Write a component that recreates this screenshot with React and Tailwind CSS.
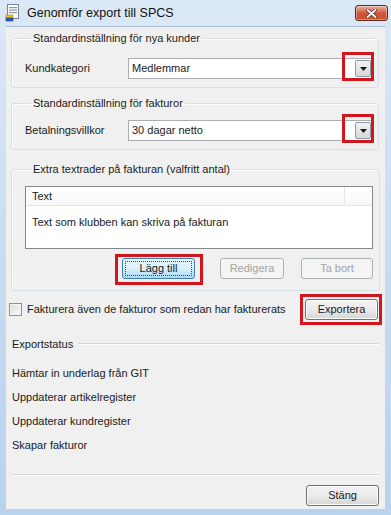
import { ChevronDown } from "lucide-react";

const FONT = { fontFamily: '"Liberation Sans", Arial, sans-serif' };

function TitleIcon() {
  return (
    <svg width="16" height="18" viewBox="0 0 16 18">
      <rect x="2.5" y="0.5" width="11" height="14" fill="#fdfdfd" stroke="#7b8694" />
      <rect x="4" y="3" width="8" height="1.2" fill="#8a96a6" />
      <rect x="4" y="5.5" width="8" height="1.2" fill="#8a96a6" />
      <rect x="4" y="8" width="8" height="1.2" fill="#8a96a6" />
      <rect x="1" y="11" width="7" height="3" fill="#f2c230" stroke="#b88a12" strokeWidth="0.6" />
      <rect x="1" y="14" width="7" height="3" fill="#2f5fa8" stroke="#203f72" strokeWidth="0.6" />
    </svg>
  );
}

function CloseButton() {
  return (
    <div className="w-[33px] h-[16px] rounded-[3px] border border-[#5e2a20] bg-gradient-to-b from-[#eab1a1] via-[#d1573c] to-[#c9502f] flex items-center justify-center shadow-[inset_0_0_0_1px_rgba(255,255,255,0.35)]">
      <svg width="11" height="9" viewBox="0 0 11 9">
        <path d="M1.5 1 L9.5 8 M9.5 1 L1.5 8" stroke="#5a2418" strokeWidth="3.2" strokeLinecap="round" />
        <path d="M1.5 1 L9.5 8 M9.5 1 L1.5 8" stroke="#ffffff" strokeWidth="1.8" strokeLinecap="round" />
      </svg>
    </div>
  );
}

function Combo({ value }) {
  return (
    <div className="relative flex-1 h-[21px] bg-white border border-[#abadb3] flex items-center">
      <span className="pl-[3px] flex-1 text-[#1a1a1a]">{value}</span>
      <div className="w-[16px] h-[17px] mr-[1px] border border-[#8e9aa8] rounded-[2px] bg-gradient-to-b from-[#f4f4f4] to-[#d6d6d6] flex items-center justify-center">
        <svg width="7" height="4" viewBox="0 0 7 4">
          <path d="M0 0 H7 L3.5 4 Z" fill="#1b1b1b" />
        </svg>
      </div>
      {/* red annotation */}
      <div className="absolute right-[-2px] top-[-7px] w-[32px] h-[29px] border-[3px] border-[#d2161e]" />
    </div>
  );
}

function Btn({ children, disabled, focused, className = "" }) {
  if (disabled) {
    return (
      <div className={`h-[21px] rounded-[3px] border border-[#adb2b5] bg-[#f4f4f4] flex items-center justify-center text-[#a3a3a3] ${className}`}>
        {children}
      </div>
    );
  }
  if (focused) {
    return (
      <div className={`h-[21px] rounded-[3px] border border-[#3c7fb1] bg-gradient-to-b from-[#eaf6fd] via-[#d9f0fc] to-[#a7d9f5] p-[2px] ${className}`}>
        <div className="h-full border border-dotted border-[#444] flex items-center justify-center text-[#1a1a1a]">
          {children}
        </div>
      </div>
    );
  }
  return (
    <div className={`h-[21px] rounded-[3px] border border-[#707070] bg-gradient-to-b from-[#f2f2f2] via-[#ebebeb] to-[#d5d5d5] flex items-center justify-center text-[#1a1a1a] shadow-[inset_0_0_0_1px_#fcfcfc] ${className}`}>
      {children}
    </div>
  );
}

function Group({ legend, children, className = "" }) {
  return (
    <fieldset className={`border border-[#d5dfe5] rounded-[3px] shadow-[inset_1px_1px_0_#fff] ${className}`}>
      <legend className="ml-[6px] px-[2px] leading-[15px] text-[#1a1a1a]">{legend}</legend>
      {children}
    </fieldset>
  );
}

export default function App() {
  return (
    <div
      className="w-[391px] h-[515px] flex flex-col bg-gradient-to-b from-[#dbe8f6] via-[#c9dcf1] to-[#b9d2ee] text-[11px] overflow-hidden"
      style={FONT}
    >
      {/* title bar */}
      <div className="h-[26px] flex items-center pl-[5px] pr-[3px]">
        <TitleIcon />
        <span className="ml-[6px] text-[12.5px] text-[#111]">Genomför export till SPCS</span>
        <div className="flex-1" />
        <CloseButton />
      </div>

      {/* client area */}
      <div className="flex-1 ml-[6px] mr-[6px] mb-[6px] bg-[#f0f0f0] border-t border-[#a9bdd4] flex flex-col pl-[5px] pr-[6px] text-[#1a1a1a]">
        <Group legend="Standardinställning för nya kunder" className="mt-[4px] pl-[13px] pr-[5px] pt-[12px] pb-[8px]">
          <div className="flex items-center">
            <span className="w-[103px]">Kundkategori</span>
            <Combo value="Medlemmar" />
          </div>
        </Group>

        <Group legend="Standardinställning för fakturor" className="mt-[8px] pl-[13px] pr-[5px] pt-[9px] pb-[8px]">
          <div className="flex items-center">
            <span className="w-[103px]">Betalningsvillkor</span>
            <Combo value="30 dagar netto" />
          </div>
        </Group>

        <Group legend="Extra textrader på fakturan (valfritt antal)" className="mt-[12px] pl-[13px] pr-[6px] pt-[9px] pb-[11px]">
          <div className="h-[63px] bg-white border border-[#828790] flex flex-col">
            <div className="h-[19px] flex border-b border-[#e3e6ea] bg-gradient-to-b from-white to-[#f7f8fa]">
              <div className="flex-1 pl-[6px] flex items-center border-r border-[#e3e6ea]">Text</div>
              <div className="w-[27px]" />
            </div>
            <div className="pl-[6px] pt-[8px]">Text som klubben kan skriva på fakturan</div>
          </div>
          <div className="flex mt-[9px]">
            <div className="relative ml-[97px]">
              <Btn focused className="w-[73px]">Lägg till</Btn>
              <div className="absolute left-[-7px] right-[-8px] top-[-4px] bottom-[-6px] border-[3px] border-[#d2161e]" />
            </div>
            <Btn disabled className="w-[64px] ml-[25px]">Redigera</Btn>
            <Btn disabled className="w-[72px] ml-[17px]">Ta bort</Btn>
          </div>
        </Group>

        <div className="flex items-center mt-[8px]">
          <div className="w-[13px] h-[13px] ml-[-2px] border border-[#8e8f8f] bg-gradient-to-br from-[#dcdcdc] to-[#fbfbfb] shadow-[inset_0_0_0_1px_#f4f4f4]" />
          <span className="ml-[5px]">Fakturera även de fakturor som redan har fakturerats</span>
          <div className="flex-1" />
          <div className="relative mr-[1px]">
            <Btn className="w-[73px]">Exportera</Btn>
            <div className="absolute left-[-5px] right-[-4px] top-[-5px] bottom-[-5px] border-[3px] border-[#d2161e]" />
          </div>
        </div>

        <div className="flex items-center mt-[16px]">
          <span className="ml-[1px]">Exportstatus</span>
          <div className="flex-1 ml-[5px] h-px bg-[#d5d5d5] border-b border-white box-content" />
        </div>

        <div className="flex flex-col mt-[13px] gap-[9px] ml-[1px]">
          <span className="leading-[15px]">Hämtar in underlag från GIT</span>
          <span className="leading-[15px]">Uppdaterar artikelregister</span>
          <span className="leading-[15px]">Uppdaterar kundregister</span>
          <span className="leading-[15px]">Skapar fakturor</span>
        </div>

        <div className="mt-[21px] h-px bg-[#d5d5d5] border-b border-white box-content" />

        <div className="flex justify-end mt-[9px]">
          <Btn className="w-[73px]">Stäng</Btn>
        </div>
      </div>
    </div>
  );
}
